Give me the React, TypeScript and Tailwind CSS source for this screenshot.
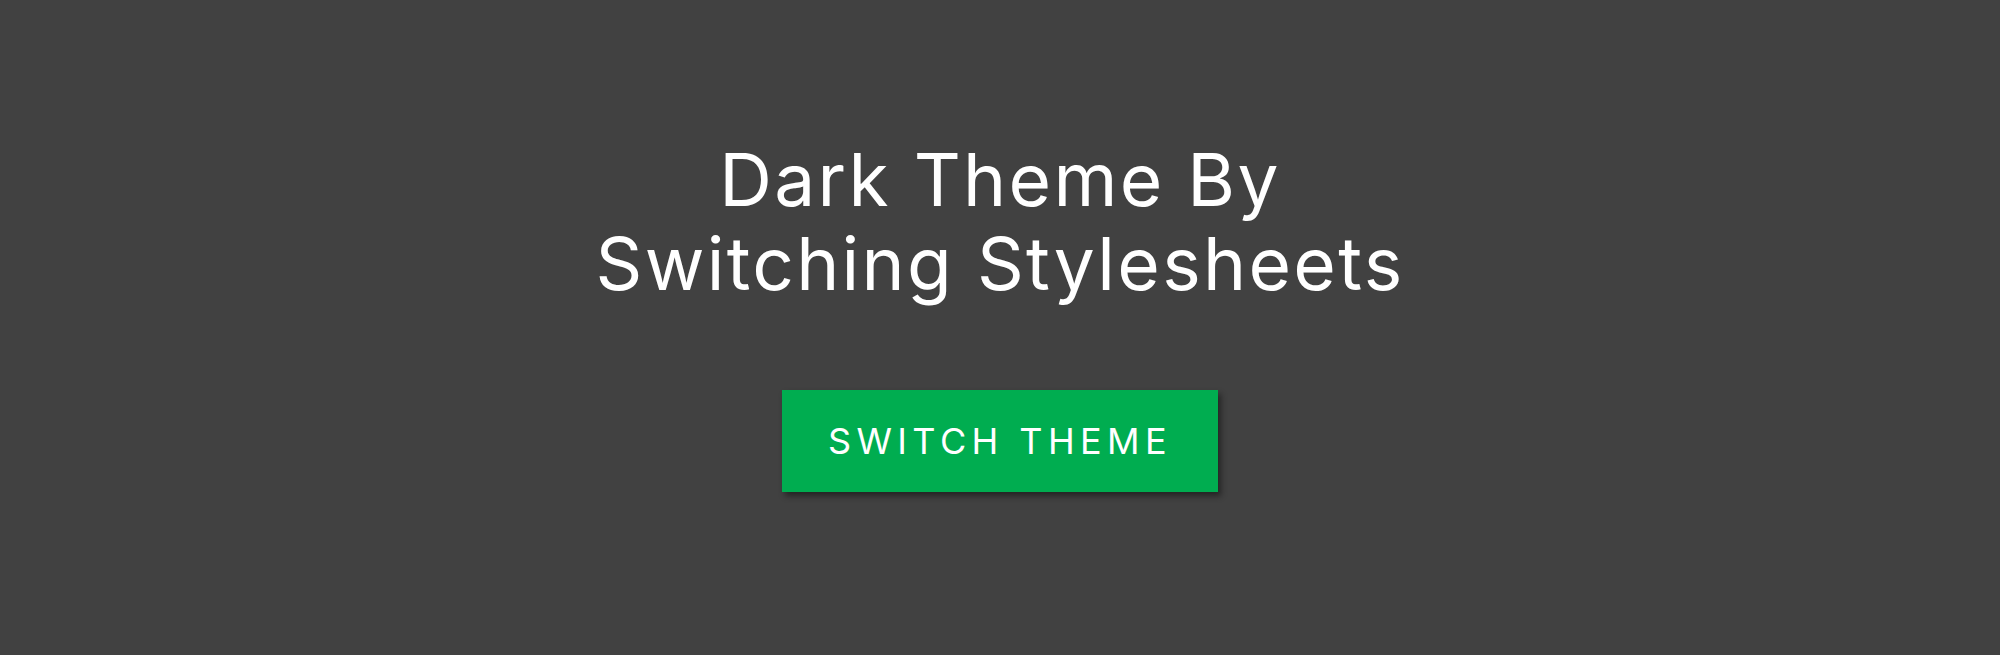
export default function App() {
  return (
    <div className="w-full h-[655px] bg-[#414141] flex flex-col items-center pt-[138px] font-['Inter',sans-serif]">
      <h1 className="text-white text-[73px] leading-[84px] tracking-[2.3px] font-normal text-center max-w-[900px]">
        Dark Theme By
        <br />
        Switching Stylesheets
      </h1>
      <button
        type="button"
        className="mt-[84px] w-[436px] h-[102px] bg-[#00ad50] text-white text-[36px] tracking-[0.15em] uppercase shadow-[3px_4px_6px_rgba(0,0,0,0.45)]"
      >
        Switch Theme
      </button>
    </div>
  );
}
